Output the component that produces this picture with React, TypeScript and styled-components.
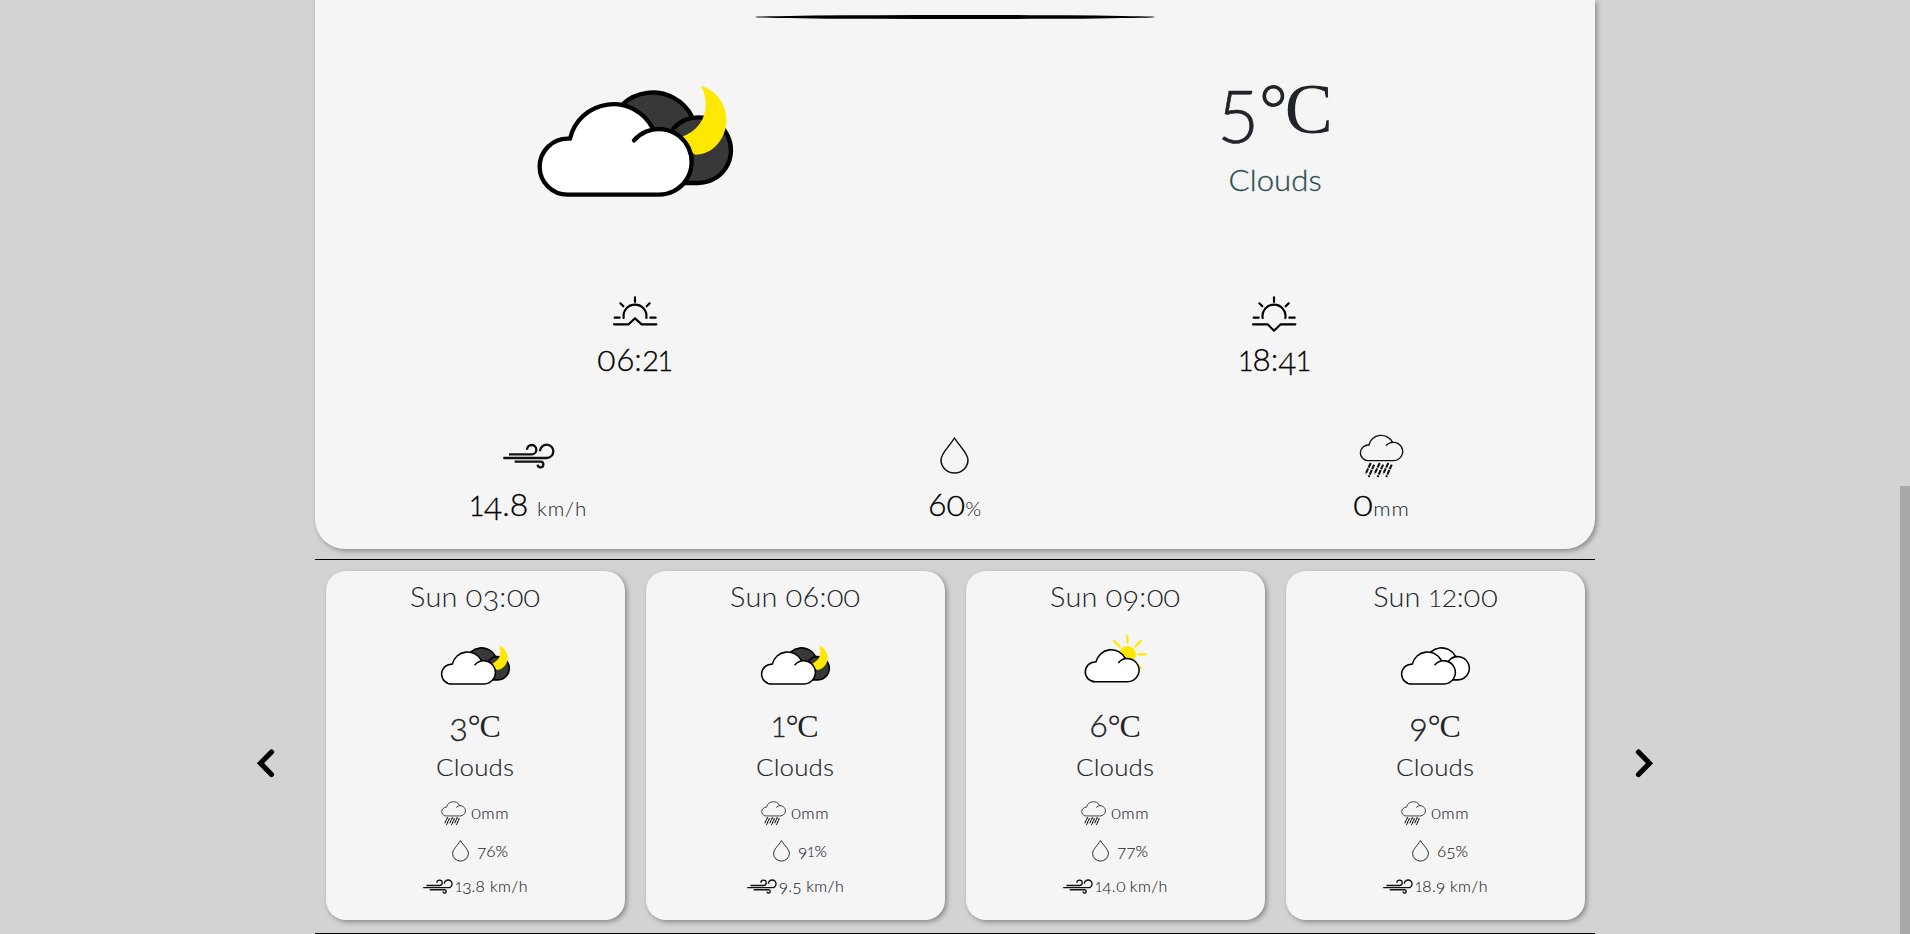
import React from 'react';
import styled, { createGlobalStyle } from 'styled-components';

const Global = createGlobalStyle`
  * { box-sizing: border-box; }
  body { margin: 0; background: #d3d3d3; overflow: hidden; font-family: Lato, "Liberation Sans", sans-serif; font-weight: 300; color: #212529; }
`;

const Page = styled.main`
  height: 934px;
  display: grid;
  grid-template-columns: 315px 1280px 305px 10px;
  background: #d3d3d3;
`;
const Side = styled.div`
  padding: 746px 38px 0;
  display: flex;
  align-items: flex-start;
`;
const LeftSide = styled(Side)`
  justify-content: flex-end;
`;
const ScrollTrack = styled.div`
  display: flex;
  flex-direction: column;
  justify-content: flex-end;
`;
const ScrollThumb = styled.div`
  height: 448px;
  background: #a9a9a9;
`;
const Content = styled.div`
  display: flex;
  flex-direction: column;
  & > * { flex-shrink: 0; }
`;
const Current = styled.section`
  height: 549px;
  background: #f5f5f5;
  border-radius: 0 0 30px 30px;
  box-shadow: 2px 2px 5px rgba(0, 0, 0, 0.35);
`;
const Divider = styled.div`
  height: 59px;
  padding-top: 15px;
  display: flex;
  justify-content: center;
`;
const Stroke = styled.div`
  width: 400px;
  height: 4px;
  background: #000;
  border-radius: 50%;
`;
const Row = styled.div<{ $cols: number; $h: number }>`
  height: ${(p) => p.$h}px;
  display: grid;
  grid-template-columns: repeat(${(p) => p.$cols}, 1fr);
  justify-items: center;
`;
const Stack = styled.div`
  display: flex;
  flex-direction: column;
  align-items: center;
`;
const Text = styled.div<{ $size: number; $lh: number; $color?: string; $ls?: number; $bold?: number; $wide?: number }>`
  font-size: ${(p) => p.$size}px;
  line-height: ${(p) => p.$lh}px;
  color: ${(p) => p.$color ?? '#212529'};
  letter-spacing: ${(p) => p.$ls ?? 0}px;
  -webkit-text-stroke: ${(p) => p.$bold ?? 0}px currentColor;
  white-space: pre;
  transform: scaleX(${(p) => p.$wide ?? 1});
`;
const Unit = styled.span`
  font-size: 20.5px;
  color: #222;
  letter-spacing: 0.9px;
  -webkit-text-stroke: 0;
`;
const DegreeText = styled.span`
  font-family: "Liberation Serif", serif;
  font-weight: 400;
  line-height: 0;
  letter-spacing: 0;
  -webkit-text-stroke: 0;
`;
const Ring = styled.span`
  letter-spacing: -0.04em;
`;
const Short = styled.span<{ $stretch: number; $pad: number }>`
  display: inline-block;
  font-size: 0.85em;
  line-height: 1;
  letter-spacing: 0;
  margin: 0 ${(p) => p.$pad}em;
  transform: scaleX(${(p) => p.$stretch});
`;
const Low = styled.span`
  vertical-align: -0.14em;
  line-height: 0;
  letter-spacing: 0;
`;
const Rule = styled.hr<{ $top: number }>`
  margin: ${(p) => p.$top}px 0 0;
  width: 100%;
  border: 0;
  height: 1px;
  background: #000;
`;
const Cards = styled.div`
  height: 373px;
  padding-top: 11px;
  display: grid;
  grid-template-columns: repeat(4, 320px);
  justify-items: center;
`;
const Card = styled.article`
  width: 299px;
  height: 348.5px;
  display: flex;
  flex-direction: column;
  align-items: center;
  background: #f5f5f5;
  border-radius: 20px;
  box-shadow: 2px 2px 5px rgba(0, 0, 0, 0.35);
`;
const Details = styled.div`
  padding-top: 5.5px;
  display: flex;
  flex-direction: column;
  align-items: center;
`;
const Detail = styled.div<{ $gap: number; $h: number; $indent?: number }>`
  display: flex;
  align-items: center;
  gap: ${(p) => p.$gap}px;
  height: ${(p) => p.$h}px;
  padding-left: ${(p) => p.$indent ?? 0}px;
`;
const IconSlot = styled.div<{ $h: number; $top: number; $left?: number }>`
  height: ${(p) => p.$h}px;
  padding-top: ${(p) => p.$top}px;
  padding-left: ${(p) => p.$left ?? 0}px;
`;
const Svg = styled.svg`
  display: block;
  overflow: visible;
`;

/* Figures with old-style proportions: 0-2 at x-height, 3-5, 7 and 9 descending. */
const shortShape: Record<string, [number, number]> = {
  '0': [1.18, 0.055],
  '1': [1, -0.03],
  '2': [1.08, 0.02],
};
const Figures = ({ children }: { children: string }) => (
  <>
    {children.split('').map((c, i) => {
      const shape = shortShape[c];
      if (shape) return <Short key={i} $stretch={shape[0]} $pad={shape[1]}>{c}</Short>;
      return '34579'.includes(c) ? <Low key={i}>{c}</Low> : c;
    })}
  </>
);
const Degree = () => (
  <DegreeText>
    <Ring>°</Ring>C
  </DegreeText>
);

const Cloud = ({ fill }: { fill: string }) => (
  <g strokeLinecap="round" strokeLinejoin="round">
    <path
      d="M149 207A133 133 0 0 1 397 176L416 178A98 98 0 0 1 416 375H142A84 84 0 0 1 142 207Z"
      fill={fill}
    />
    <path
      d="M397 176A133 133 0 0 0 149 207H142A84 84 0 0 0 142 375H416A98.500 98.500 0 1 0 341 212"
      fill="none"
      stroke="#000"
      strokeWidth="13"
    />
  </g>
);

type Sky = 'moon' | 'sun' | 'clouds';
const SkyIcon = ({ kind, width }: { kind: Sky; width: number }) => {
  const box = kind === 'sun' ? '22 -13 585 420' : '53 -32 585 420';
  return (
    <Svg width={width} height={(width * 420) / 585} viewBox={box}>
      {kind === 'sun' ? (
        <g stroke="#ffe800" strokeWidth="19" strokeLinecap="round">
          <circle cx="415" cy="144" r="73" fill="#ffe800" stroke="none" />
          <path d="M415 -14V40M508 142H572M301 28L350 76M530 28L482 76M482 212L528 256" />
        </g>
      ) : (
        <g transform="translate(118 -35)">
          <Cloud fill={kind === 'moon' ? '#383838' : '#fff'} />
        </g>
      )}
      {kind === 'moon' && (
        <path
          d="M541 48C590 62 618 105 618 150C618 210 575 255 525 255L505 240L480 203C530 185 556 150 556 105C556 80 551 64 541 48Z"
          fill="#ffe800"
        />
      )}
      <Cloud fill="#fff" />
    </Svg>
  );
};

const SunHorizon = ({ set }: { set?: boolean }) => (
  <Svg
    width="44"
    height="36"
    viewBox={set ? '102 48 132 108' : '99 48 132 108'}
    fill="none"
    stroke="#000"
    strokeWidth="6.500"
    strokeLinejoin="round"
    strokeLinecap="round"
  >
    <path d={set ? 'M102 133H146L165 152L185 133H229' : 'M102 133H146L165 115L185 133H229'} />
    <path d="M131 114A34.500 34.500 0 1 1 199 114M165 52V66M121 70L130 79M209 70L200 79M104 113H119M211 113H227" />
  </Svg>
);
const Wind = ({ width }: { width: number }) => (
  <Svg width={width} height={width / 2} viewBox="160 66 156 78" fill="none" stroke="#111" strokeWidth="7">
    <path d="M161 111H290A20 20 0 1 0 271 91M178 100H246A14 14 0 1 0 232 86M195 122H273A8.500 8.500 0 1 1 264 131" />
  </Svg>
);
const Drop = ({ width }: { width: number }) => (
  <Svg width={width} height={width * 1.276} viewBox="118 50 84 111" preserveAspectRatio="none" fill="none" stroke="#111" strokeWidth="4.500" strokeLinejoin="round">
    <path d="M160 53C145 79 121 98 121 119A39 39 0 0 0 199 119C199 98 175 79 160 53Z" />
  </Svg>
);
const Rain = ({ width }: { width: number }) => (
  <Svg width={width} height={width * 0.967} viewBox="1331 39 132 132" preserveAspectRatio="none" fill="none" stroke="#111" strokeWidth="4">
    <path d="M1428 64A36 36 0 0 0 1360 72A23.500 23.500 0 0 0 1357 119H1432A27.500 27.500 0 1 0 1409 74" />
    <path
      strokeWidth="6"
      strokeDasharray="15 2.500"
      d="M1365 126L1350 159M1375 131L1359 168M1391 126L1376 159M1401 131L1385 168M1416 126L1401 159M1426 131L1410 168"
    />
  </Svg>
);
const Arrow = ({ flip }: { flip?: boolean }) => (
  <Svg width="24" height="35" viewBox="0 0 24 35" fill="none" stroke="#000" strokeWidth="5.200" strokeLinecap="round">
    <path d={flip ? 'M18.500 6L7.500 17.200L18.500 28.500' : 'M5.500 6L16.500 17.200L5.500 28.500'} />
  </Svg>
);

const forecast: { time: string; sky: Sky; temp: string; hum: string; wind: string }[] = [
  { time: '03:00', sky: 'moon', temp: '3', hum: '76', wind: '13.8' },
  { time: '06:00', sky: 'moon', temp: '1', hum: '91', wind: '9.5' },
  { time: '09:00', sky: 'sun', temp: '6', hum: '77', wind: '14.0' },
  { time: '12:00', sky: 'clouds', temp: '9', hum: '65', wind: '18.9' },
];

export default function App() {
  return (
    <Page>
      <Global />
      <LeftSide>
        <Arrow flip />
      </LeftSide>
      <Content>
        <Current>
          <Divider>
            <Stroke />
          </Divider>
          <Row $cols={2} $h={237}>
            <IconSlot $h={140} $top={0.4}>
              <SkyIcon kind="moon" width={195} />
            </IconSlot>
            <Stack>
              <Text $size={72} $lh={93} $bold={0.6}>
                <Figures>5</Figures>
                <Degree />
              </Text>
              <Text $size={28.8} $lh={57} $ls={0.1} $wide={1.08} $bold={0.3} $color="#2f4f4f">Clouds</Text>
            </Stack>
          </Row>
          <Row $cols={2} $h={135}>
            <Stack>
              <SunHorizon />
              <Text $size={32} $lh={53} $bold={0.3} $color="#000" $wide={0.98}><Figures>06:21</Figures></Text>
            </Stack>
            <Stack>
              <SunHorizon set />
              <Text $size={32} $lh={53} $bold={0.3} $color="#000" $wide={0.98}><Figures>18:41</Figures></Text>
            </Stack>
          </Row>
          <Row $cols={3} $h={100}>
            <Stack>
              <IconSlot $h={47} $top={11.5} $left={2}><Wind width={52} /></IconSlot>
              <Text $size={32} $lh={51} $bold={0.3} $color="#000"><Figures>14.8</Figures> <Unit>km/h</Unit></Text>
            </Stack>
            <Stack>
              <IconSlot $h={47} $top={6}><Drop width={29} /></IconSlot>
              <Text $size={32} $lh={51} $bold={0.3} $color="#000"><Figures>60</Figures><Unit>%</Unit></Text>
            </Stack>
            <Stack>
              <IconSlot $h={47} $top={2.5}><Rain width={45.5} /></IconSlot>
              <Text $size={32} $lh={51} $bold={0.3} $color="#000" $wide={1.05}><Figures>0</Figures><Unit>mm</Unit></Text>
            </Stack>
          </Row>
        </Current>
        <Rule $top={10} />
        <Cards>
          {forecast.map((f) => (
            <Card key={f.time}>
              <Text $size={28} $lh={51} $ls={0.2} $wide={1.03}>Sun <Figures>{f.time}</Figures></Text>
              <IconSlot $h={79} $top={13.5}><SkyIcon kind={f.sky} width={69} /></IconSlot>
              <Text $size={32} $lh={48} $bold={0.3}><Figures>{f.temp}</Figures><Degree /></Text>
              <Text $size={24} $lh={36} $ls={0.1} $wide={1.08} $bold={0.15}>Clouds</Text>
              <Details>
                <Detail $gap={4.5} $h={45} $indent={1}><Rain width={25.5} /><Text $size={16.5} $lh={24} $ls={0.9} $bold={0.1}><Figures>0</Figures>mm</Text></Detail>
                <Detail $gap={8} $h={30} $indent={10}><Drop width={17} /><Text $size={16} $lh={24} $bold={0.1}><Figures>{f.hum}</Figures>%</Text></Detail>
                <Detail $gap={2} $h={41} $indent={1}><Wind width={30} /><Text $size={16} $lh={24} $ls={0.4} $bold={0.1}><Figures>{f.wind}</Figures> km/h</Text></Detail>
              </Details>
            </Card>
          ))}
        </Cards>
        <Rule $top={0} />
      </Content>
      <Side>
        <Arrow />
      </Side>
      <ScrollTrack>
        <ScrollThumb />
      </ScrollTrack>
    </Page>
  );
}
